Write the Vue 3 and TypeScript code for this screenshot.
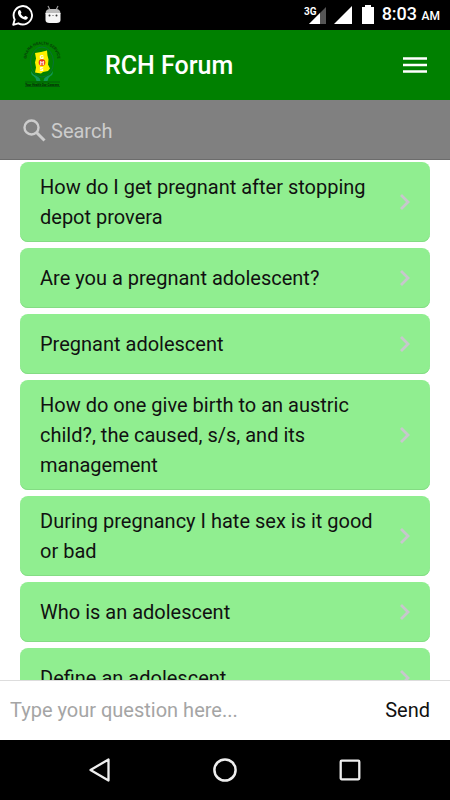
<script setup lang="ts">
import { computed, ref } from 'vue'

interface Question {
  id: number
  title: string
}

const search = ref('')
const draft = ref('')

const questions = ref<Question[]>([
  { id: 1, title: 'How do I get pregnant after stopping depot provera' },
  { id: 2, title: 'Are you a pregnant adolescent?' },
  { id: 3, title: 'Pregnant adolescent' },
  { id: 4, title: 'How do one give birth to an austric child?, the caused, s/s, and its management' },
  { id: 5, title: 'During pregnancy I hate sex is it good or bad' },
  { id: 6, title: 'Who is an adolescent' },
  { id: 7, title: 'Define an adolescent' },
])

const visible = computed(() =>
  questions.value.filter((q) => q.title.toLowerCase().includes(search.value.trim().toLowerCase())),
)

function send(): void {
  const title = draft.value.trim()
  if (!title) return
  questions.value.unshift({ id: questions.value.length + 1, title })
  draft.value = ''
}
</script>

<template>
  <div class="app">
    <div class="status">
      <div class="status-left">
        <svg width="22" height="22" viewBox="0 0 22 22" aria-hidden="true">
          <path d="M1.2 20.8 2.7 15.6A9.2 9.2 0 1 1 6.3 19.3Z" fill="none" stroke="#fff" stroke-width="1.9" stroke-linejoin="round" />
          <path d="M6.900 6.300c.5-.5 1.100-.5 1.500.1l1 1.900c.2.5-.1.900-.7 1.500.8 1.500 1.900 2.600 3.400 3.200.7-.9 1-1.100 1.500-.9l1.900 1c.5.3.4 1.200-.1 1.700-1 1.100-2.500 1-4.200.3-2.300-1-4-2.700-4.900-4.700-.7-1.600-.3-3.100.6-4.100Z" fill="#fff" />
        </svg>
        <svg width="16" height="20" viewBox="0 0 16 20" aria-hidden="true">
          <path d="m3 1 2 4M13 1l-2 4" stroke="#999" stroke-width="1.200" />
          <path d="M.5 9Q.5 4 5 4h6q4.500 0 4.500 5Z" fill="#bbb" />
          <path d="M.5 8h15v7q0 3-4 3h-7q-4 0-4-3Z" fill="#f5f5f5" />
          <circle cx="4.500" cy="10.500" r="1" fill="#333" />
          <circle cx="11.500" cy="10.500" r="1" fill="#333" />
          <path d="M7 10.500h2" stroke="#aaa" />
        </svg>
      </div>
      <div class="status-right">
        <svg width="24" height="20" viewBox="0 0 24 20" aria-hidden="true">
          <path d="M7 19 25 1v18Z" fill="#555" />
          <path d="M7 19 18 8v11Z" fill="#fff" />
          <text x="2" y="10" class="network">3G</text>
        </svg>
        <svg width="20" height="20" viewBox="0 0 20 20" aria-hidden="true"><path d="M0 19 18 1v18Z" fill="#fff" /></svg>
        <svg width="12" height="20" viewBox="0 0 12 20" aria-hidden="true"><path d="M3 0h6v2h3v17H0V2h3Z" fill="#fff" /></svg>
        <div class="clock">8:03 <span class="meridiem">AM</span></div>
      </div>
    </div>

    <header class="header">
      <svg width="42" height="50" viewBox="0 0 42 50" role="img" aria-label="Ghana Health Service">
        <defs><path id="arc" d="M5.500 21C4-1 38-1 36.500 21" /></defs>
        <ellipse cx="21" cy="22" rx="11.500" ry="15" fill="none" stroke="#087238" stroke-width="1" />
        <text class="logo-arc"><textPath href="#arc" startOffset="50%" text-anchor="middle">GHANA HEALTH SERVICE</textPath></text>
        <path d="M14 13 20 12l6-1.500.5 5 1 4-.5 5 2 4-2 2.500-5 1-2 1.500-6-1 1-5-1-5 1-4Z" fill="#fff000" />
        <circle cx="21" cy="22.500" r="3.300" fill="#e92f18" />
        <text x="21" y="19" class="logo-letter">G</text>
        <text x="21" y="25" class="logo-letter">H</text>
        <text x="21" y="31" class="logo-letter">S</text>
        <path d="M10.500 31q1 4 5 5l3 2 1 3h-4q0-3-3-5-3-1-2-5ZM31.500 31q-1 4-5 5l-3 2-1 3h4q0-3 3-5 3-1 2-5Z" fill="#119758" />
        <path d="M4 42h35M4 46.500h35" stroke="#064a0c" stroke-width=".7" />
        <text x="21" y="45.500" class="logo-motto">Your Health Our Concern</text>
      </svg>
      <h1 class="title">RCH Forum</h1>
      <button type="button" aria-label="Menu">
        <svg width="24" height="18" viewBox="0 0 24 18" aria-hidden="true">
          <path d="M0 2.500h24M0 9h24M0 15.500h24" stroke="#fff" stroke-width="2.600" />
        </svg>
      </button>
    </header>

    <label class="search">
      <svg width="24" height="24" viewBox="0 0 24 24" aria-hidden="true">
        <circle cx="8.500" cy="8.500" r="7" fill="none" stroke="#ccc" stroke-width="2.400" />
        <path d="m13.500 13.500 8 8" stroke="#ccc" stroke-width="3" />
      </svg>
      <input v-model="search" type="text" placeholder="Search" aria-label="Search" />
    </label>

    <main class="list">
      <a v-for="q in visible" :key="q.id" class="card" href="#">
        <span class="card-title">{{ q.title }}</span>
        <svg width="10" height="16" viewBox="0 0 10 16" aria-hidden="true">
          <path d="m1 1 7 7-7 7" fill="none" stroke="#c7c7cc" stroke-width="2.800" />
        </svg>
      </a>
    </main>

    <form class="composer" @submit.prevent="send">
      <input v-model="draft" type="text" placeholder="Type your question here..." aria-label="Your question" />
      <button type="submit">Send</button>
    </form>

    <nav class="navbar" aria-label="System">
      <button type="button" aria-label="Back">
        <svg width="24" height="26" viewBox="0 0 24 26" aria-hidden="true">
          <path d="M20.500 2.500v21L2.500 13Z" fill="none" stroke="#eee" stroke-width="2.300" stroke-linejoin="round" />
        </svg>
      </button>
      <button type="button" aria-label="Home">
        <svg width="24" height="26" viewBox="0 0 24 26" aria-hidden="true">
          <circle cx="12" cy="13" r="10.600" fill="none" stroke="#eee" stroke-width="2.500" />
        </svg>
      </button>
      <button type="button" aria-label="Recent apps">
        <svg width="24" height="26" viewBox="0 0 24 26" aria-hidden="true">
          <rect x="2.700" y="3.700" width="18.600" height="18.600" rx="1" fill="none" stroke="#eee" stroke-width="2.300" />
        </svg>
      </button>
    </nav>
  </div>
</template>

<style>
body {
  margin: 0;
  background: #fff;
}
</style>

<style scoped>
.app {
  display: flex;
  flex-direction: column;
  height: 100vh;
  overflow: hidden;
  background: #fff;
  color: #111;
  font-family: Roboto, "Liberation Sans", sans-serif;
  font-size: 20px;
}

button,
input {
  padding: 0;
  border: 0;
  background: none;
  color: inherit;
  font: inherit;
}

input {
  flex: 1;
  min-width: 0;
  outline: none;
}

svg {
  display: block;
  flex: none;
}

.status {
  display: flex;
  flex: none;
  align-items: center;
  justify-content: space-between;
  height: 30px;
  padding: 0 10px 0 12px;
  background: #000;
  color: #fff;
}

.status-left {
  display: flex;
  align-items: center;
  gap: 11px;
}

.status-right {
  display: flex;
  align-items: center;
  gap: 8px;
}

.network {
  fill: #fff;
  font-size: 10px;
  font-weight: 700;
}

.clock {
  font-size: 18px;
  font-weight: 500;
  line-height: 32px;
}

.meridiem {
  font-size: 12px;
}

.header {
  display: flex;
  flex: none;
  align-items: center;
  height: 70px;
  padding: 0 23px 0 21px;
  background: #008000;
}

.logo-arc {
  fill: #063d08;
  font-size: 4px;
  font-weight: 700;
}

.logo-letter {
  fill: #fff;
  font-size: 6px;
  font-weight: 900;
  text-anchor: middle;
}

.logo-motto {
  fill: #052c06;
  font-size: 3px;
  font-weight: 900;
  text-anchor: middle;
}

.title {
  flex: 1;
  margin: 0 0 0 42px;
  padding-top: 2px;
  color: #fff;
  font-size: 25px;
  font-weight: 500;
  line-height: 30px;
}

.search {
  display: flex;
  flex: none;
  align-items: center;
  gap: 4px;
  box-sizing: border-box;
  height: 60px;
  padding: 2px 23px 0;
  border-bottom: 1px solid #6c6c6c;
  background: #808080;
  color: #ccc;
}

.search input::placeholder {
  color: #ccc;
  opacity: 1;
}

.list {
  display: flex;
  flex: 1;
  flex-direction: column;
  gap: 6px;
  min-height: 0;
  padding: 2px 20px 0;
  overflow: hidden;
}

.card {
  display: flex;
  flex: none;
  align-items: center;
  gap: 20px;
  box-sizing: border-box;
  min-height: 60px;
  padding: 10px 20px;
  border-radius: 8px;
  background: #90ee90;
  box-shadow: inset 0 -1px #84dc84;
  line-height: 30px;
  color: #111;
  text-decoration: none;
}

.card-title {
  flex: 1;
}

.composer {
  display: flex;
  flex: none;
  align-items: center;
  gap: 20px;
  box-sizing: border-box;
  height: 60px;
  padding: 0 20px 2px 10px;
  border-top: 1px solid #ddd;
  background: #fff;
}

.composer input::placeholder {
  color: #a5a5a5;
  opacity: 1;
}

.navbar {
  display: flex;
  flex: none;
  align-items: center;
  justify-content: space-between;
  height: 60px;
  padding: 0 88px;
  background: #000;
}
</style>
